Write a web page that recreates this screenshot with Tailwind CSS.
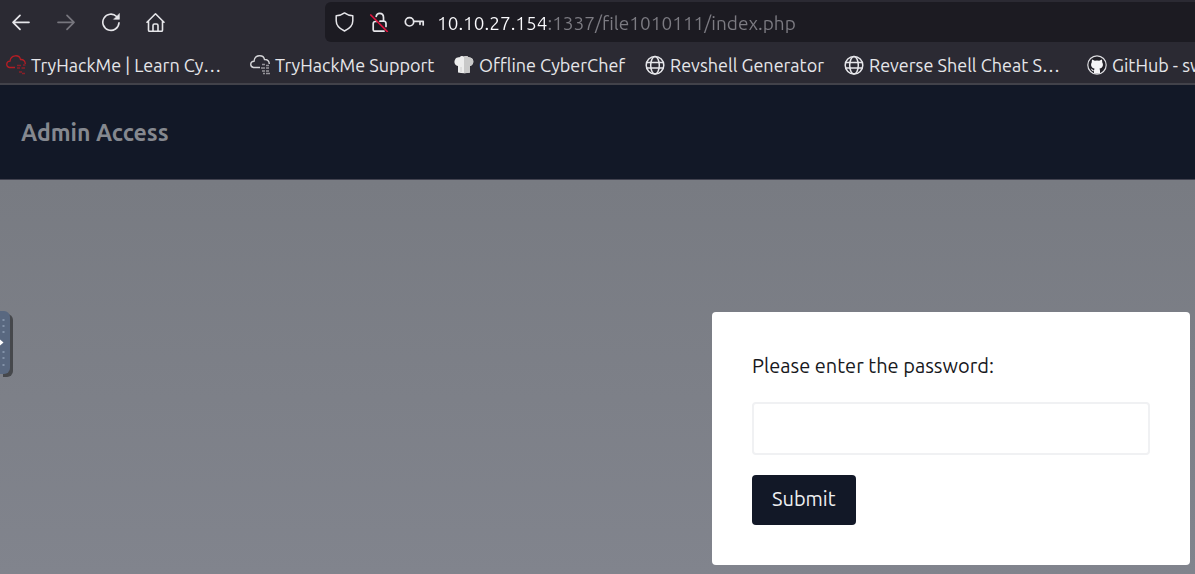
<!DOCTYPE html>
<html lang="en">
<head>
<meta charset="utf-8">
<meta name="viewport" content="width=device-width, initial-scale=1">
<title>Admin Access</title>
<script src="https://cdn.jsdelivr.net/npm/@tailwindcss/browser@4"></script>
</head>
<body class="flex min-h-screen flex-col overflow-x-hidden bg-[#7c8087] font-['Ubuntu','Noto_Sans',sans-serif] font-[450]">
<header class="border-b-2 border-[#42424a] bg-[#2b2a33] text-[#e6e6ea]">
  <div class="flex h-[44px] items-center pl-[11px]">
    <nav class="flex w-[314px] shrink-0 items-center gap-[25px]" aria-label="Browser controls">
      <button type="button" aria-label="Back"><svg class="size-5" viewBox="0 0 20 20" fill="none" stroke="currentColor" stroke-width="1.7" stroke-linecap="round" stroke-linejoin="round"><path d="M18 10.300H2M9 3.300L2 10.300l7 7"/></svg></button>
      <button type="button" aria-label="Forward" class="text-[#77767e]" disabled><svg class="size-5" viewBox="0 0 20 20" fill="none" stroke="currentColor" stroke-width="1.7" stroke-linecap="round" stroke-linejoin="round"><path d="M2 10.300h16M11 3.300l7 7-7 7"/></svg></button>
      <button type="button" aria-label="Reload"><svg class="size-5" viewBox="0 0 20 20" fill="none" stroke="currentColor" stroke-width="1.6" stroke-linecap="round"><path d="M15.600 4.500A8.100 8.100 0 1 0 18 10.900"/><path d="M18.400 1.800v5.500h-5.500z" fill="currentColor" stroke-width=".6"/></svg></button>
      <button type="button" aria-label="Home"><svg class="size-5" viewBox="0 0 20 20" fill="none" stroke="currentColor" stroke-width="1.6" stroke-linecap="round" stroke-linejoin="round"><path d="M1 10.200L9.500 1.800 18 10.200M2.500 9v9q0 1.400 1.400 1.400h11.200q1.400 0 1.400-1.400V9M7 19v-5.500q0-1.500 1.500-1.500h2q1.500 0 1.500 1.500V19"/></svg></button>
    </nav>
    <div class="flex h-10 flex-1 items-center rounded-l-md bg-[#1c1b22] pl-[10px]">
      <div class="mr-[12px] flex shrink-0 gap-[14px]">
        <svg class="size-5" viewBox="0 0 20 20" fill="none" stroke="currentColor" stroke-width="1.500" stroke-linejoin="round"><path d="M9.500 .9Q6 3.500 1.200 3.700v5.100q0 6.500 8.300 10.200 8.300-3.700 8.300-10.200V3.700Q13 3.500 9.500 .9z"/></svg>
        <svg class="size-5" viewBox="0 0 20 20" fill="none" stroke="currentColor" stroke-width="1.700" stroke-linecap="round" stroke-linejoin="round"><path d="M7.200 4.300Q7.800 1.300 10.600 1.300q3.900 0 3.900 4.200V9q2.500.2 2.500 2.500v3M11 9.200h3M7.500 9.500h-1Q4.200 9.500 4.200 11.700v6q0 1.500 1.500 1.500H15"/><path d="M1.800 3l16.500 16.500" stroke="#e2143f" stroke-width="1.700"/></svg>
        <svg class="ml-px h-5 w-[21px]" viewBox="0 0 21 20" fill="none" stroke="currentColor" stroke-width="1.700" stroke-linecap="round" stroke-linejoin="round"><circle cx="5.500" cy="9.800" r="4.200"/><path d="M9.700 9.300h9.500v3.700M16 9.300v3"/></svg>
      </div>
      <!-- Host is bright, port and path are dimmed -->
      <input type="text" aria-label="Address" class="min-w-0 flex-1 bg-transparent bg-linear-to-r from-[#fbfbfe] from-[110px] to-[#7c7b82] to-[110px] bg-clip-text pt-[2px] text-[19px] leading-7 text-transparent outline-none" value="10.10.27.154:1337/file1010111/index.php">
    </div>
  </div>
  <nav class="flex h-[39px] items-center overflow-hidden pt-[3px] pl-[6px] text-lg leading-6 whitespace-nowrap" aria-label="Bookmarks">
    <a href="#" class="flex w-[244px] shrink-0 items-center gap-[5px]"><svg class="size-5" viewBox="0 0 20 20" fill="none" stroke="#b51d24" stroke-width="1.300"><path d="M9 12.500H3.500C-.5 11.500 0 6.300 4 6.200 4.700-.8 13.500-.7 14.500 4.500c3.200-.2 4.900 2 4.700 4.500"/><path d="M11 10.500h4m2-.5h2.500M11 13h3m1.500 0h3.500M13 17h3m0 1.500h3" stroke="#8a1f28"/></svg>TryHackMe | Learn Cy…</a>
    <a href="#" class="flex w-[204px] shrink-0 items-center gap-[5px]"><svg class="size-5" viewBox="0 0 20 20" fill="none" stroke="#d4d4d7" stroke-width="1.400"><path d="M10 12.500H3.500C-.5 11.500 0 6.300 4 6.200 4.700-.8 13.500-.7 14.500 4.500c3.200-.2 4.900 2 4.700 4.500"/><path d="M12 9.500h3m1 1h3m-8 2.500h4m1 0h3m-7 3h3m1 0h3m-3 2.500h4m-7 0h2" stroke="#96959b" stroke-width="1.500"/></svg>TryHackMe Support</a>
    <a href="#" class="flex w-[191px] shrink-0 items-center gap-[5px]"><svg class="size-5" viewBox="0 0 20 20"><path d="M4 17.500v-6.500C.5 10.500-.3 7 1 4.800 1.800 2.500 4 2 5.500 2.300 7 .5 9 .8 10 1.500q3-1.300 4.500.8c2 0 4 1 4.500 2.700 1 2.500-.5 5.500-3 6v6.500q-6 1.500-12 0z" fill="#ededed"/><path d="M10 1.500q3-1.300 4.500.8c2 0 4 1 4.500 2.700 1 2.500-.5 5.500-3 6v6.500q-3 .8-6 .8z" fill="#c9c9c9"/><path d="M7 12v5" stroke="#c9c9c9" stroke-width=".8"/></svg>Offline CyberChef</a>
    <a href="#" class="flex w-[199px] shrink-0 items-center gap-[5px]"><svg class="size-5" viewBox="0 0 20 20" fill="none" stroke="currentColor" stroke-width="1.500"><circle cx="10" cy="10.300" r="8.800"/><ellipse cx="10" cy="10.300" rx="4.300" ry="8.800"/><path d="M1.500 7.500h17M1.500 13.100h17"/></svg>Revshell Generator</a>
    <a href="#" class="flex w-[243px] shrink-0 items-center gap-[5px]"><svg class="size-5" viewBox="0 0 20 20" fill="none" stroke="currentColor" stroke-width="1.500"><circle cx="10" cy="10.300" r="8.800"/><ellipse cx="10" cy="10.300" rx="4.300" ry="8.800"/><path d="M1.500 7.500h17M1.500 13.100h17"/></svg>Reverse Shell Cheat S…</a>
    <a href="#" class="flex shrink-0 items-center gap-[5px]"><svg class="size-5" viewBox="0 0 20 20"><circle cx="10" cy="10" r="9.200" fill="#222128" stroke="#dddde1" stroke-width="1.200"/><path d="M5 4.500l2.800 1.300q2.200-.6 4.400 0L15 4.500l.3 3q1 1.500.5 3.400-.6 2.300-3.400 2.800.6.700.6 2v2.400q-3 1-6 0v-2q-2 .3-2.600-1.500l-.8-.8q1.500-.3 2.300 1.300.6.500 1.200.1 0-.9.500-1.500-2.800-.5-3.400-2.800-.5-1.900.5-3.400z" fill="#f5f5f7"/></svg>GitHub - sw</a>
  </nav>
</header>
<div class="flex h-[95px] items-center border-b border-[#42424f] bg-[#121827] px-[21px] pt-[2px]">
  <h1 class="text-[23px] leading-7 font-bold text-[#85888f]">Admin Access</h1>
</div>
<main class="relative flex-1 bg-linear-to-b from-[#787b82] to-[#81848d] px-[5px] pt-[132px] pb-[9px]">
  <button type="button" aria-label="Open side panel" class="absolute top-[131px] left-0 h-[63px] w-[10px] rounded-r-md bg-[#596880] shadow-[3px_3px_0_#46484c]">
    <svg class="h-[63px] w-[10px]" viewBox="0 0 10 63" fill="#8291a8"><path d="M2.500 8h2v2h-2zM2.500 14h2v2h-2zM2.500 20h2v2h-2zM2.500 40h2v2h-2zM2.500 46h2v2h-2zM2.500 53h2v2h-2z"/><path d="M0 28.500L3.500 31.500 0 34.500z" fill="#fff"/></svg>
  </button>
  <form class="ml-auto w-full max-w-[478px] rounded bg-white p-10" onsubmit="return false">
    <label for="password" class="block text-xl leading-7 text-[#17181c]">Please enter the password:</label>
    <input id="password" type="password" class="mt-[22px] block h-[53px] w-full rounded border-2 border-[#f0f1f3] bg-white px-4 text-xl">
    <button type="submit" class="mt-5 block h-[50px] rounded bg-[#121827] px-5 pb-[2px] text-xl leading-7 text-[#eeeff1]">Submit</button>
  </form>
</main>
</body>
</html>
